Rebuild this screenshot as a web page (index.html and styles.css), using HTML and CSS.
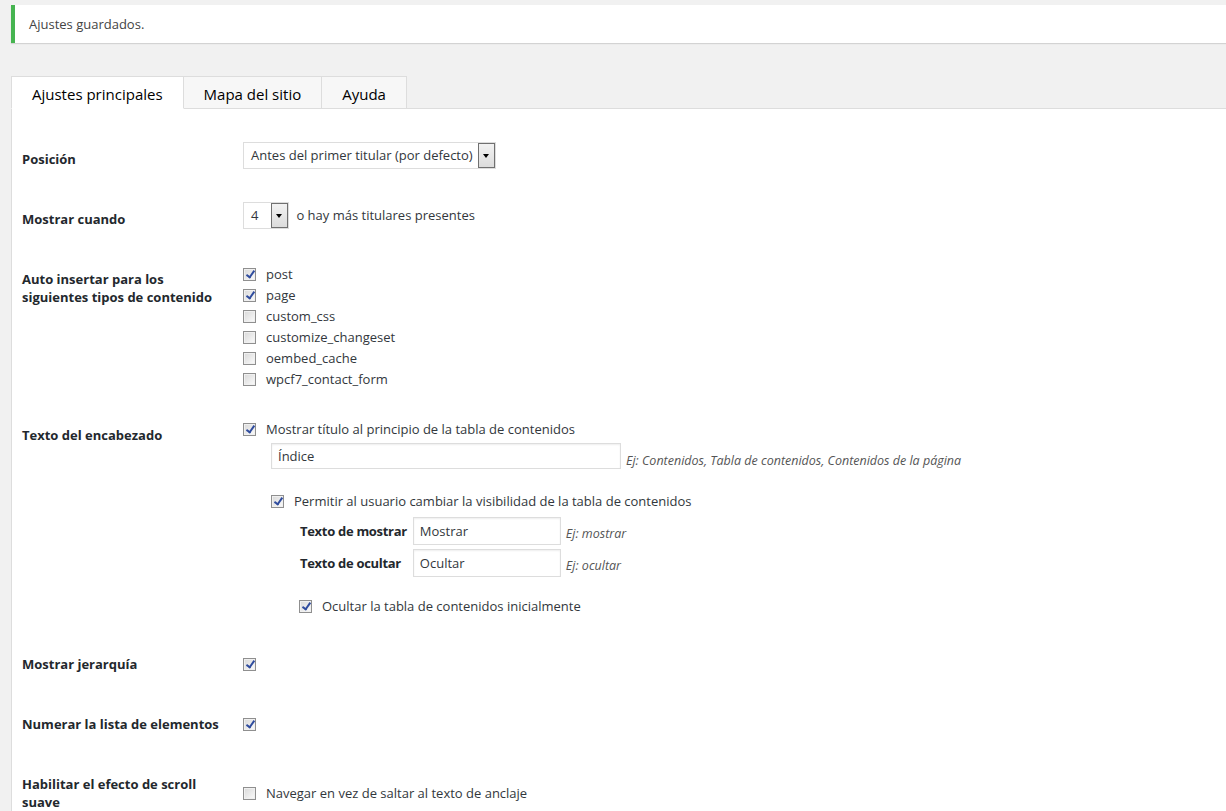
FILE: index.html
```html
<!DOCTYPE html>
<html lang="es">
<head>
    <meta charset="UTF-8">
    <title>Ajustes</title>
    <link rel="stylesheet" href="styles.css">
</head>
<body>

<div class="wrap">
    <div class="notice">Ajustes guardados.</div>

    <!-- Tabs -->
    <div class="tabs">
        <span class="tab active">Ajustes principales</span>
        <span class="tab">Mapa del sitio</span>
        <span class="tab">Ayuda</span>
    </div>

    <div class="panel">
        <table class="form-table">
            <tr>
                <th>Posición</th>
                <td>
                    <span class="select wide">Antes del primer titular (por defecto)<span class="arrow"></span></span>
                </td>
            </tr>
            <tr>
                <th>Mostrar cuando</th>
                <td>
                    <span class="select small">4<span class="arrow"></span></span>
                    <span class="inline-text">o hay más titulares presentes</span>
                </td>
            </tr>
            <tr>
                <th>Auto insertar para los<br>siguientes tipos de contenido</th>
                <td class="top">
                    <div class="check-list">
                        <div class="check"><span class="box checked"></span>post</div>
                        <div class="check"><span class="box checked"></span>page</div>
                        <div class="check"><span class="box"></span>custom_css</div>
                        <div class="check"><span class="box"></span>customize_changeset</div>
                        <div class="check"><span class="box"></span>oembed_cache</div>
                        <div class="check"><span class="box"></span>wpcf7_contact_form</div>
                    </div>
                </td>
            </tr>
            <tr>
                <th>Texto del encabezado</th>
                <td class="top">
                    <div class="check"><span class="box checked"></span>Mostrar título al principio de la tabla de contenidos</div>
                    <div class="indent">
                        <div class="field-line">
                            <span class="input long">Índice</span>
                            <span class="help">Ej: Contenidos, Tabla de contenidos, Contenidos de la página</span>
                        </div>
                        <div class="toggle-block">
                            <div class="check"><span class="box checked"></span>Permitir al usuario cambiar la visibilidad de la tabla de contenidos</div>
                            <table class="sub-table">
                                <tr>
                                    <th>Texto de mostrar</th>
                                    <td><span class="input short">Mostrar</span><span class="help">Ej: mostrar</span></td>
                                </tr>
                                <tr>
                                    <th>Texto de ocultar</th>
                                    <td><span class="input short">Ocultar</span><span class="help">Ej: ocultar</span></td>
                                </tr>
                            </table>
                            <div class="check last"><span class="box checked"></span>Ocultar la tabla de contenidos inicialmente</div>
                        </div>
                    </div>
                </td>
            </tr>
            <tr>
                <th>Mostrar jerarquía</th>
                <td><div class="check"><span class="box checked"></span></div></td>
            </tr>
            <tr>
                <th>Numerar la lista de elementos</th>
                <td><div class="check"><span class="box checked"></span></div></td>
            </tr>
            <tr>
                <th>Habilitar el efecto de scroll<br>suave</th>
                <td><div class="check"><span class="box"></span>Navegar en vez de saltar al texto de anclaje</div></td>
            </tr>
        </table>
    </div>
</div>

</body>
</html>
```

FILE: styles.css
```css
* {
    box-sizing: border-box;
}

body {
    margin: 0;
    background-color: #f1f1f1;
    font-family: "Open Sans", "Noto Sans", sans-serif;
    font-size: 13px;
    color: #32373c;
    overflow: hidden;
}

.wrap {
    margin-left: 11px;
}

/* Saved notice */
.notice {
    margin-top: 5px;
    height: 38px;
    padding: 0 14px;
    line-height: 38px;
    background-color: #fff;
    border-left: 4px solid #46b450;
    box-shadow: 0 1px 1px rgba(0, 0, 0, 0.12);
    color: #444;
}

/* Tabs */
.tabs {
    display: flex;
    margin-top: 33px;
    height: 33px;
}

.tab {
    display: block;
    height: 33px;
    padding: 2px 20px 0;
    line-height: 30px;
    font-size: 15px;
    color: #000;
    background-color: #f7f7f7;
    border: 1px solid #ddd;
    border-left: none;
    border-bottom: 1px solid #ddd;
}

.tab:first-child {
    border-left: 1px solid #ddd;
}

.tab.active {
    background-color: #fff;
    border-bottom-color: #fff;
}

.panel {
    margin-top: -1px;
    background-color: #fff;
    border-top: 1px solid #ddd;
    border-left: 1px solid #ddd;
    padding-top: 20px;
    padding-bottom: 40px;
}

/* Form table */
.form-table {
    border-collapse: collapse;
}

.form-table > tbody > tr > th {
    width: 221px;
    padding: 21px 10px 21px 10px;
    text-align: left;
    vertical-align: top;
    line-height: 18px;
    font-weight: bold;
    color: #23282d;
}

.form-table > tbody > tr > td {
    padding: 15px 10px;
    vertical-align: middle;
    line-height: 18px;
}

.form-table > tbody > tr > td.top {
    vertical-align: top;
}

/* Fake selects */
.select {
    display: inline-flex;
    align-items: center;
    height: 27px;
    margin: -4px 0 4px 0;
    padding-left: 7px;
    border: 1px solid #ddd;
    background-color: #fff;
    vertical-align: middle;
    position: relative;
    color: #32373c;
}

.select.wide {
    width: 253px;
}

.select.small {
    width: 46px;
}

.select .arrow {
    position: absolute;
    right: 0;
    top: 0;
    width: 17px;
    height: 25px;
    border: 1px solid #707070;
    background: linear-gradient(#f2f2f2, #dcdcdc);
}

.select .arrow::after {
    content: "";
    position: absolute;
    left: 4px;
    top: 10px;
    border-left: 3.5px solid transparent;
    border-right: 3.5px solid transparent;
    border-top: 4px solid #000;
}

.inline-text {
    margin-left: 4px;
    vertical-align: middle;
    position: relative;
    top: -4px;
}

/* Checkboxes */
.check-list .check {
    line-height: 21px;
}

.check {
    display: flex;
    align-items: center;
    line-height: 18px;
    min-height: 18px;
}

.box {
    flex: none;
    width: 13px;
    height: 13px;
    margin-right: 10px;
    border: 1px solid #8f8f8f;
    background: linear-gradient(135deg, #d8d8d8, #fbfbfb);
    box-shadow: inset 0 0 0 1px #f0f0f0;
    position: relative;
}

.box.checked::after {
    content: "";
    position: absolute;
    left: 4px;
    top: 0px;
    width: 3px;
    height: 7px;
    border-right: 2px solid #2f4c9e;
    border-bottom: 2px solid #2f4c9e;
    transform: rotate(35deg);
}

/* Inputs */
.indent {
    margin-left: 28px;
}

.field-line {
    display: flex;
    align-items: flex-end;
    margin-top: 5px;
}

.input {
    display: inline-block;
    height: 26px;
    line-height: 24px;
    padding: 0 6px;
    border: 1px solid #ddd;
    box-shadow: inset 0 1px 2px rgba(0, 0, 0, 0.07);
    background-color: #fff;
    color: #32373c;
    vertical-align: middle;
}

.input.long {
    width: 350px;
}

.input.short {
    width: 148px;
    height: 28px;
    line-height: 26px;
}

.help {
    margin-left: 5px;
    font-style: italic;
    font-size: 12.5px;
    color: #555;
    line-height: 18px;
}

.field-line .help {
    margin-bottom: -1px;
}

.toggle-block {
    margin-top: 23px;
}

.sub-table {
    border-collapse: collapse;
    margin: 5px 0 0 28px;
}

.sub-table th {
    width: 107px;
    padding: 2px 6px 2px 1px;
    text-align: left;
    font-weight: bold;
    color: #23282d;
    white-space: nowrap;
    letter-spacing: -0.3px;
}

.sub-table td {
    padding: 2px 0;
}

.sub-table .help {
    vertical-align: middle;
    position: relative;
    top: 3px;
}

.toggle-block .check.last {
    margin: 18px 0 4px 28px;
}
```
